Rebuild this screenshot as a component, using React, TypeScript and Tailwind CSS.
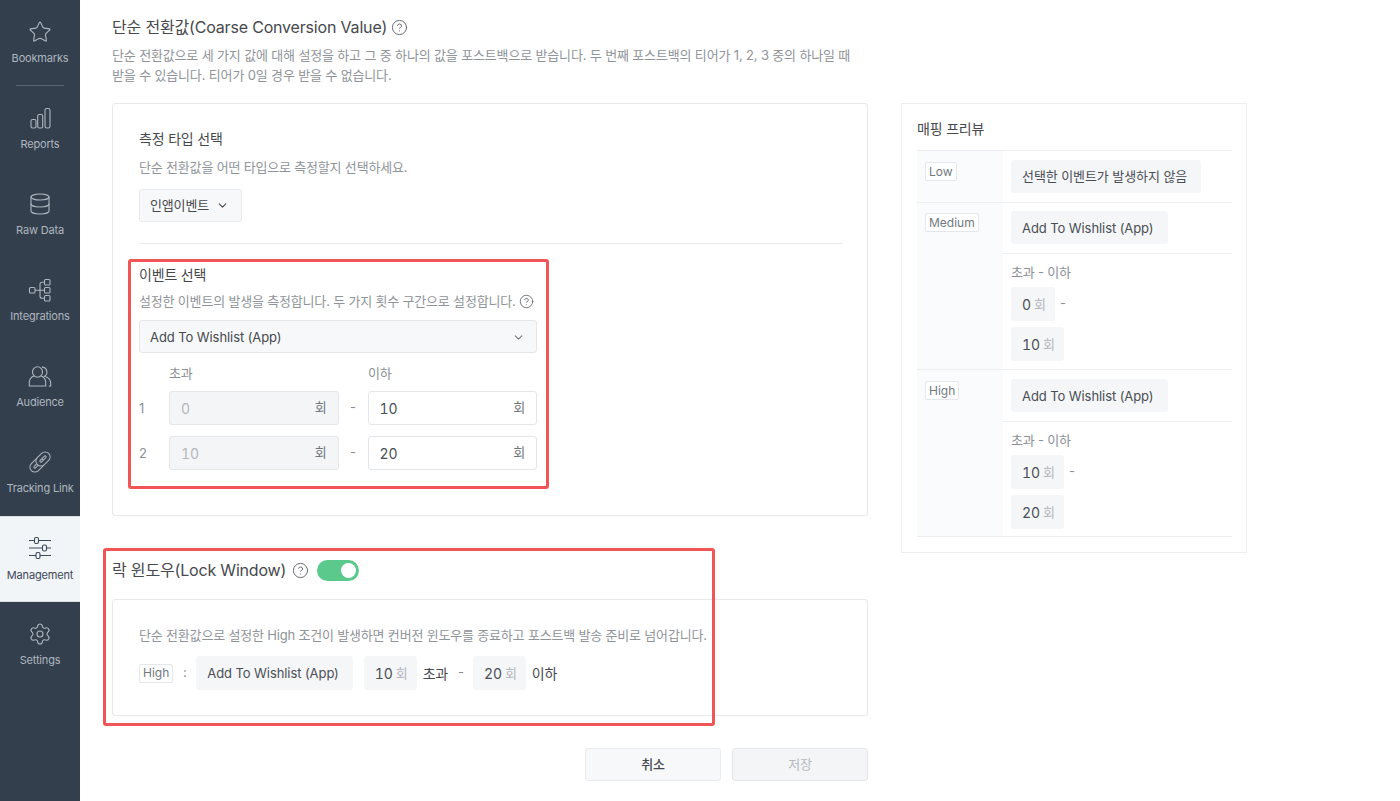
import React from "react";
import { Star, Database, Settings, ChevronDown, CircleHelp } from "lucide-react";

const font = "[font-family:Inter,'Noto_Sans_CJK_KR',sans-serif]";

function Bars() {
  return (
    <svg width="24" height="24" viewBox="0 0 24 24" fill="none" stroke="currentColor" strokeWidth="1.1">
      <rect x="3" y="13.5" width="5" height="8.5" rx="1.5" />
      <rect x="9.7" y="8.5" width="5" height="13.5" rx="1.5" />
      <rect x="17" y="2.5" width="5" height="19.5" rx="1.8" />
    </svg>
  );
}
function Integrations() {
  return (
    <svg width="24" height="24" viewBox="0 0 24 24" fill="none" stroke="currentColor" strokeWidth="1.1">
      <rect x="1.5" y="9.5" width="5.5" height="5.5" rx="1" />
      <rect x="16.5" y="1.5" width="5.5" height="5.5" rx="1" />
      <rect x="16.5" y="9.5" width="5.5" height="5.5" rx="1" />
      <rect x="16.5" y="17.5" width="5.5" height="5.5" rx="1" />
      <path d="M7 12.25h9.5M16.5 4.25H14a2 2 0 0 0-2 2v12a2 2 0 0 0 2 2h2.5" />
    </svg>
  );
}
function Audience() {
  return (
    <svg width="26" height="24" viewBox="0 0 26 24" fill="none" stroke="currentColor" strokeWidth="1.1">
      <ellipse cx="10.5" cy="8" rx="5" ry="5.2" />
      <path d="M7 12c-2.8 1-4.7 3.5-4.7 6.5V22h16.4v-3.5c0-3-1.9-5.5-4.7-6.5" />
      <path d="M15 3.1a5 5 0 0 1 2.6 9.2c3.6 1.2 6.1 3.6 6.1 7V22h-2" />
    </svg>
  );
}
function LinkIcon() {
  return (
    <svg width="26" height="26" viewBox="0 0 26 26" fill="none">
      <g transform="rotate(-45 10 16)">
        <rect x="4" y="13" width="12" height="6" rx="3" stroke="currentColor" strokeWidth="5" />
        <rect x="4" y="13" width="12" height="6" rx="3" stroke="#333f4d" strokeWidth="3" />
      </g>
      <g transform="rotate(-45 16 10)">
        <rect x="10" y="7" width="12" height="6" rx="3" stroke="currentColor" strokeWidth="5" />
        <rect x="10" y="7" width="12" height="6" rx="3" stroke="#333f4d" strokeWidth="3" />
      </g>
    </svg>
  );
}
function Sliders() {
  return (
    <svg width="24" height="24" viewBox="0 0 24 24" fill="none" stroke="currentColor" strokeWidth="1.1">
      <path d="M1 4.5h5.5M10.5 4.5H23M1 12h13.5M18.5 12H23M1 19.5h7M12 19.5h11" />
      <rect x="6.5" y="1.5" width="4" height="6" rx="1.5" />
      <rect x="14.5" y="9" width="4" height="6" rx="1.5" />
      <rect x="8" y="16.5" width="4" height="6" rx="1.5" />
    </svg>
  );
}

function NavItem({ icon, label, active }: { icon: React.ReactNode; label: string; active?: boolean }) {
  return (
    <div className={`flex h-[86px] flex-col items-center ${active ? "border-y border-[#d9dfe5] bg-[#f2f5f8] text-[#3c4857]" : "text-[#aeb6bf]"}`}>
      <div className={`${active ? "mt-[18px]" : "mt-[19px]"} flex h-[26px] w-[26px] items-center justify-center`}>{icon}</div>
      <div className={`${active ? "mt-[7px]" : "mt-[6px]"} text-[11px] leading-[14px] whitespace-nowrap`}>{label}</div>
    </div>
  );
}

function Badge({ children }: { children: React.ReactNode }) {
  return (
    <span className="inline-flex h-[19px] items-center rounded-[2px] border border-[#e4e7eb] bg-white px-[3px] text-[12px] leading-none tracking-normal text-[#71787f]">
      {children}
    </span>
  );
}

function Chip({ children, short, low, className = "" }: { children: React.ReactNode; short?: boolean; low?: boolean; className?: string }) {
  return (
    <div className={`flex w-fit items-center rounded-[3px] bg-[#f5f6f8] pl-[11px] text-[13px] tracking-[-0.08px] whitespace-nowrap text-[#4a4f55] ${low ? "pt-[3px]" : "pt-px"} ${short ? "h-[33px]" : "h-[34px]"} ${className}`}>
      {children}
    </div>
  );
}

function Count({ n }: { n: string }) {
  return (
    <Chip className="pr-[9px]">
      <span className="text-[14px] tabular-nums">{n}</span>
      <span className="ml-[3px] text-[13px] text-[#b3b7bc]">회</span>
    </Chip>
  );
}

function Field({ value, disabled }: { value: string; disabled?: boolean }) {
  return (
    <div className={`flex h-[34px] w-[169.5px] items-center justify-between rounded-[3px] border border-[#e3e6ea] px-[11px] text-[14px] ${disabled ? "bg-[#f4f5f7] text-[#b4b8bd]" : "bg-white text-[#4a4f55]"}`}>
      <span className="tabular-nums">{value}</span>
      <span className="text-[13px] text-[#6f757b]">회</span>
    </div>
  );
}

function Help({ size = 17 }: { size?: number }) {
  return <CircleHelp size={size} strokeWidth={1.3} className="shrink-0 text-[#5a5f65]" />;
}

function Row({ n, a, b }: { n: string; a: string; b: string }) {
  return (
    <div className="flex items-center">
      <div className="w-[30px] pt-px text-[13px] text-[#8a8f95]">{n}</div>
      <Field value={a} disabled />
      <div className="w-[29px] text-center text-[13px] text-[#8a8f95]">-</div>
      <Field value={b} />
    </div>
  );
}

function PreviewRow({ label, min, max, top, badgeTop, lower }: { label: string; min: string; max: string; top: string; badgeTop: string; lower: string }) {
  return (
    <div className="flex border-b border-[#eceef1]">
      <div className={`flex w-[86px] shrink-0 items-start bg-[#fafbfc] pl-[8px] ${badgeTop}`}>
        <Badge>{label}</Badge>
      </div>
      <div className="flex-1">
        <div className={`border-b border-[#eceef1] pb-[9px] pl-[8px] ${top}`}>
          <Chip short low className="pr-[14px]">Add To Wishlist (App)</Chip>
        </div>
        <div className={`pl-[8px] ${lower}`}>
          <div className="text-[13px] leading-[20px] text-[#8a8f95]">초과 - 이하</div>
          <div className="mt-[5px] flex items-center">
            <Count n={min} />
            <span className="ml-[5px] text-[13px] text-[#8a8f95]">-</span>
          </div>
          <div className="mt-[6px]">
            <Count n={max} />
          </div>
        </div>
      </div>
    </div>
  );
}

export default function App() {
  return (
    <div className={`flex h-[801px] w-[1400px] overflow-hidden bg-white tracking-[-0.18px] ${font}`}>
      <aside className="w-[80px] shrink-0 bg-[#333f4d]">
        <div className="flex h-[86px] flex-col items-center text-[#aeb6bf]">
          <div className="mt-[19px] flex h-[26px] items-center justify-center">
            <Star size={24} strokeWidth={1.1} />
          </div>
          <div className="mt-[6px] text-[11px] leading-[14px]">Bookmarks</div>
          <div className="mt-[20px] h-px w-[48px] bg-[#5b6673]" />
        </div>
        <NavItem icon={<Bars />} label="Reports" />
        <NavItem icon={<Database size={24} strokeWidth={1.1} />} label="Raw Data" />
        <NavItem icon={<Integrations />} label="Integrations" />
        <NavItem icon={<Audience />} label="Audience" />
        <NavItem icon={<LinkIcon />} label="Tracking Link" />
        <NavItem icon={<Sliders />} label="Management" active />
        <NavItem icon={<Settings size={24} strokeWidth={1.1} />} label="Settings" />
      </aside>

      <main className="flex pl-[32px]">
        <div className="w-[756px] shrink-0 pt-[15px]">
          <div className="flex h-[24px] items-center gap-[4px] text-[16px] text-[#46494d]">
            단순 전환값(Coarse Conversion Value) <Help />
          </div>
          <p className="mt-[6px] w-[745px] text-[13px] leading-[20px] tracking-[-0.15px] text-[#8f9499]">
            단순 전환값으로 세 가지 값에 대해 설정을 하고 그 중 하나의 값을 포스트백으로 받습니다. 두 번째 포스트백의 티어가 1, 2, 3 중의 하나일 때 받을 수 있습니다. 티어가 0일 경우 받을 수 없습니다.
          </p>

          <section className="mt-[18px] rounded-[3px] border border-[#e6e8eb] pt-[25px] pr-[25px] pb-[45px] pl-[26px]">
            <h3 className="text-[14px] leading-[20px] text-[#46494d]">측정 타입 선택</h3>
            <p className="mt-[8px] text-[13px] leading-[20px] text-[#8f9499]">단순 전환값을 어떤 타입으로 측정할지 선택하세요.</p>
            <div className="mt-[12px] flex h-[33px] w-[103px] items-center justify-center gap-[7px] rounded-[3px] border border-[#e8eaed] bg-[#f7f8fa] pr-[2px] text-[13px] text-[#46494d]">
              인앱이벤트 <ChevronDown size={13} />
            </div>
            <div className="mt-[21px] h-px bg-[#e8eaed]" />

            <div className="relative mt-[21px]">
              <div className="absolute top-[-6px] left-[-11px] h-[230px] w-[421px] rounded-[3px] border-[3px] border-[#f25555]" />
              <h3 className="text-[14px] leading-[20px] text-[#46494d]">이벤트 선택</h3>
              <div className="mt-[6px] flex items-center gap-[3px] text-[13px] leading-[20px] text-[#8f9499]">
                설정한 이벤트의 발생을 측정합니다. 두 가지 횟수 구간으로 설정합니다. <Help size={15} />
              </div>
              <div className="mt-[9px] flex h-[33px] w-[398px] items-center justify-between rounded-[3px] border border-[#e3e6ea] bg-[#f7f8fa] pt-[2px] pr-[11px] pl-[10px] text-[13px] tracking-[-0.08px] text-[#46494d]">
                Add To Wishlist (App) <ChevronDown size={13} className="text-[#777]" />
              </div>
              <div className="mt-[10px] flex text-[13px] leading-[20px] text-[#8a8f95]">
                <span className="ml-[30px] w-[199px]">초과</span>
                <span>이하</span>
              </div>
              <div className="mt-[8px]">
                <Row n="1" a="0" b="10" />
              </div>
              <div className="mt-[11px]">
                <Row n="2" a="10" b="20" />
              </div>
            </div>
          </section>

          <div className="relative mt-[42px]">
            <div className="absolute top-[-10px] left-[-9px] h-[178px] w-[612px] rounded-[3px] border-[3px] border-[#f25555]" />
            <div className="flex h-[24px] items-center gap-[6px] text-[16px] text-[#46494d]">
              락 윈도우(Lock Window) <Help />
              <div className="ml-[2px] flex h-[21px] w-[42px] items-center justify-end rounded-full bg-[#5cc98c] pr-[3px]">
                <div className="h-[15px] w-[15px] rounded-full bg-white" />
              </div>
            </div>
            <section className="mt-[17px] rounded-[3px] border border-[#e6e8eb] pt-[25px] pr-[25px] pb-[25px] pl-[26px]">
              <p className="text-[13px] leading-[20px] text-[#8f9499]">
                단순 전환값으로 설정한 High 조건이 발생하면 컨버전 윈도우를 종료하고 포스트백 발송 준비로 넘어갑니다.
              </p>
              <div className="mt-[11px] flex items-center text-[14px] text-[#46494d]">
                <Badge>High</Badge>
                <span className="w-[23px] text-center text-[13px] text-[#8a8f95]">:</span>
                <Chip className="pr-[14px]">Add To Wishlist (App)</Chip>
                <span className="ml-[11px]">
                  <Count n="10" />
                </span>
                <span className="ml-[6px]">초과</span>
                <span className="ml-[10px] text-[13px] text-[#8a8f95]">-</span>
                <span className="ml-[9px]">
                  <Count n="20" />
                </span>
                <span className="ml-[6px]">이하</span>
              </div>
            </section>
          </div>

          <div className="mt-[32px] flex justify-end gap-[11px]">
            <div className="flex h-[33px] w-[136px] items-center justify-center rounded-[3px] border border-[#e8eaed] bg-[#f7f8fa] text-[13px] font-medium text-[#46494d]">취소</div>
            <div className="flex h-[33px] w-[136px] items-center justify-center rounded-[3px] border border-[#e3e6ea] bg-[#f4f5f7] text-[13px] text-[#b4b8bd]">저장</div>
          </div>
        </div>

        <aside className="mt-[103px] ml-[33px] h-[450px] w-[346px] shrink-0 border border-[#eceef1] pr-[14px] pl-[15px]">
          <h3 className="flex h-[46px] items-center pt-[3px] text-[14px] text-[#46494d]">매핑 프리뷰</h3>
          <div className="border-t border-[#eceef1]">
            <div className="flex border-b border-[#eceef1]">
              <div className="flex w-[86px] shrink-0 items-start bg-[#fafbfc] pt-[11px] pl-[8px]">
                <Badge>Low</Badge>
              </div>
              <div className="flex-1 py-[9px] pl-[8px]">
                <Chip short className="pr-[14px]">선택한 이벤트가 발생하지 않음</Chip>
              </div>
            </div>
            <PreviewRow label="Medium" min="0" max="10" top="pt-[8px]" badgeTop="pt-[10px]" lower="pt-[8px] pb-[8px]" />
            <PreviewRow label="High" min="10" max="20" top="pt-[9px]" badgeTop="pt-[11px]" lower="pt-[8px] pb-[7px]" />
          </div>
        </aside>
      </main>
    </div>
  );
}
